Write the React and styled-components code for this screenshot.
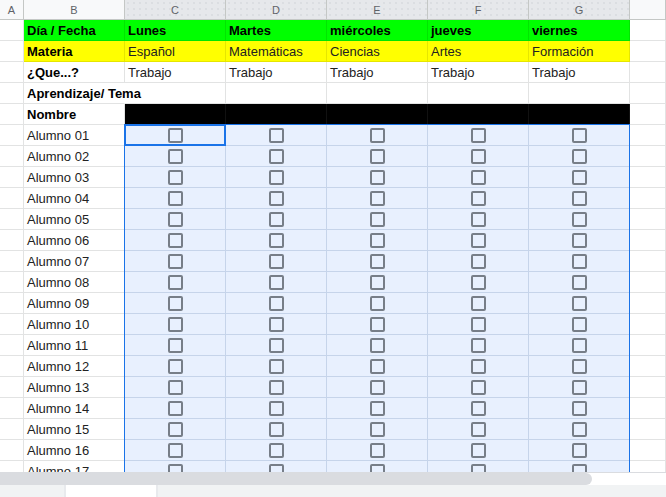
import React from "react";
import styled, { createGlobalStyle } from "styled-components";

const Global = createGlobalStyle`
  html, body { margin: 0; padding: 0; background: #fff; }
  body { font-family: "Liberation Sans", Arial, sans-serif; }
  * { box-sizing: border-box; }
`;

const Sheet = styled.div`
  width: 666px;
  height: 497px;
  display: flex;
  flex-direction: column;
  overflow: hidden;
  background: #fff;
`;

const GridArea = styled.div`
  position: relative;
  flex: 1;
  min-height: 0;
  overflow: hidden;
`;

const Grid = styled.div`
  display: grid;
  grid-template-columns: 24px repeat(6, 101px) 1fr;
  grid-template-rows: 20px;
  grid-auto-rows: 21px;
`;

const ColHead = styled.div`
  display: flex;
  align-items: center;
  justify-content: center;
  font-family: "Liberation Sans", Arial, sans-serif;
  font-size: 11px;
  color: #5f6368;
  border-right: 1px solid #c4c7c5;
  border-bottom: 1px solid #c4c7c5;
  background-color: ${(p) => (p.$active ? "#e6e8eb" : "#f8f9fa")};
  background-image: ${(p) =>
    p.$active
      ? "radial-gradient(circle, #d5d8dc 0.6px, transparent 0.9px)"
      : "none"};
  background-size: 6px 6px;
`;

const Cell = styled.div`
  display: flex;
  align-items: flex-end;
  justify-content: ${(p) => (p.$center ? "center" : "flex-start")};
  padding: 0 3px 2px;
  font-size: 13px;
  line-height: 15px;
  font-weight: ${(p) => (p.$bold ? 700 : 400)};
  color: ${(p) => (p.$bold ? "#000" : "#222")};
  white-space: nowrap;
  overflow: ${(p) => (p.$overflow ? "visible" : "hidden")};
  background: ${(p) => p.$bg || "transparent"};
  border-bottom: 1px solid ${(p) => p.$line || "#e2e3e3"};
  border-right: 1px solid
    ${(p) => (p.$noRight ? "transparent" : p.$line || "#e2e3e3")};
  position: relative;
  z-index: ${(p) => (p.$overflow ? 1 : 0)};
`;

const CheckCell = styled(Cell)`
  align-items: center;
  justify-content: center;
  padding: 0;
`;

const Checkbox = styled.span`
  display: block;
  width: 15px;
  height: 15px;
  border: 2px solid #777e88;
  border-radius: 2px;
`;

const RangeBox = styled.div`
  position: absolute;
  left: 124px;
  top: 124px;
  width: 506px;
  height: 400px;
  border: 1px solid #1a73e8;
  pointer-events: none;
  z-index: 2;
`;

const ActiveBox = styled.div`
  position: absolute;
  left: 124px;
  top: 124px;
  width: 102px;
  height: 22px;
  border: 2px solid #1a73e8;
  pointer-events: none;
  z-index: 3;
`;

const ScrollTrack = styled.div`
  height: 13px;
  border-top: 1px solid #dadce0;
  display: flex;
  background: #fff;
`;

const ScrollThumb = styled.div`
  width: 592px;
  height: 100%;
  background: #dadce0;
  border-radius: 0 6px 6px 0;
`;

const TabBar = styled.div`
  height: 12px;
  background: #f1f3f4;
  display: flex;
  padding-left: 64px;
`;

const Tab = styled.div`
  width: 94px;
  height: 100%;
  background: #fff;
  border-left: 2px solid #e8eaed;
  border-right: 2px solid #e8eaed;
`;

const GREEN = "#00ff00";
const YELLOW = "#ffff00";
const LINE_GREEN = "#00e600";
const LINE_YELLOW = "#e6e600";
const SEL_BG = "#e8f0fe";
const SEL_LINE = "#c6d4ea";

const letters = ["A", "B", "C", "D", "E", "F", "G"];
const days = ["Lunes", "Martes", "miércoles", "jueves", "viernes"];
const subjects = ["Español", "Matemáticas", "Ciencias", "Artes", "Formación"];

export default function App() {
  const alumnos = Array.from({ length: 17 }, (_, i) =>
    `Alumno ${String(i + 1).padStart(2, "0")}`
  );

  return (
    <>
      <Global />
      <Sheet>
        <GridArea>
          <Grid>
            {letters.map((l, i) => (
              <ColHead key={l} $active={i >= 2}>
                {l}
              </ColHead>
            ))}
            <ColHead />

            {/* Row 1 */}
            <Cell />
            <Cell $bold $bg={GREEN} $line={LINE_GREEN}>
              Día / Fecha
            </Cell>
            {days.map((d) => (
              <Cell key={d} $bold $bg={GREEN} $line={LINE_GREEN}>
                {d}
              </Cell>
            ))}
            <Cell />

            {/* Row 2 */}
            <Cell />
            <Cell $bold $bg={YELLOW} $line={LINE_YELLOW}>
              Materia
            </Cell>
            {subjects.map((s) => (
              <Cell key={s} $bg={YELLOW} $line={LINE_YELLOW}>
                {s}
              </Cell>
            ))}
            <Cell />

            {/* Row 3 */}
            <Cell />
            <Cell $bold>¿Que...?</Cell>
            {days.map((d) => (
              <Cell key={d}>Trabajo</Cell>
            ))}
            <Cell />

            {/* Row 4 */}
            <Cell />
            <Cell $bold $overflow $noRight>
              Aprendizaje/ Tema
            </Cell>
            {days.map((d) => (
              <Cell key={d} />
            ))}
            <Cell />

            {/* Row 5 */}
            <Cell />
            <Cell $bold>Nombre</Cell>
            {days.map((d) => (
              <Cell key={d} $bg="#000" $line="#111" />
            ))}
            <Cell />

            {alumnos.map((a) => (
              <React.Fragment key={a}>
                <Cell />
                <Cell>{a}</Cell>
                {days.map((d) => (
                  <CheckCell key={d} $bg={SEL_BG} $line={SEL_LINE}>
                    <Checkbox />
                  </CheckCell>
                ))}
                <Cell />
              </React.Fragment>
            ))}
          </Grid>
          <RangeBox />
          <ActiveBox />
        </GridArea>
        <ScrollTrack>
          <ScrollThumb />
        </ScrollTrack>
        <TabBar>
          <Tab />
        </TabBar>
      </Sheet>
    </>
  );
}
